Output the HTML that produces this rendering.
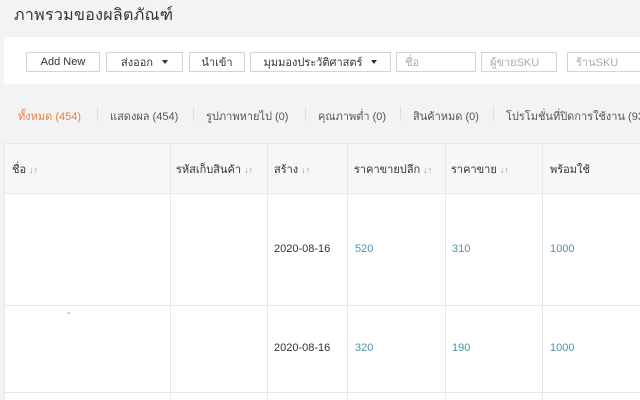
<!DOCTYPE html>
<html><head><meta charset="utf-8">
<style>
*{margin:0;padding:0;box-sizing:border-box}
body{width:640px;height:400px;overflow:hidden;background:#f2f3f5;font-family:"Liberation Sans","Noto Sans CJK SC",sans-serif;color:#333;position:relative}
.abs{position:absolute}
h1{position:absolute;left:14px;top:3px;font-size:16px;font-weight:normal;color:#333;letter-spacing:0.3px}
.bar{left:4px;top:37px;width:636px;height:47px;background:#fff}
.btn{position:absolute;top:52px;height:20px;border:1px solid #d4d4d4;background:#fff;font-size:11px;color:#333;display:flex;align-items:center;justify-content:center;white-space:nowrap}
.inp{position:absolute;top:52px;height:20px;border:1px solid #d4d4d4;background:#fff;font-size:11px;color:#aaa;padding-left:8px;display:flex;align-items:center;white-space:nowrap}
.car{display:inline-block;width:0;height:0;border-left:3.5px solid transparent;border-right:3.5px solid transparent;border-top:4px solid #333;margin-left:9px}
.tab{position:absolute;top:107px;font-size:11px;color:#555;white-space:nowrap}
.sep{position:absolute;top:106px;width:1px;height:15px;background:#ddd}
.tbl{left:4px;top:143px;width:636px;height:257px;background:#fff}
.hd{left:4px;top:143px;width:636px;height:51px;background:#f6f7f9;border-bottom:1px solid #e8e8e8;border-top:1px solid #e8e8e8}
.vl{position:absolute;top:143px;width:1px;height:257px;background:#e8e8e8}
.hl{position:absolute;left:4px;width:636px;height:1px;background:#e8e8e8}
.th{position:absolute;top:160px;font-size:11px;color:#333;white-space:nowrap}
.s{color:#999;font-size:9px}
.td{position:absolute;font-size:11px;white-space:nowrap}
.bl{color:#4a95a8}
</style></head><body>
<h1>ภาพรวมของผลิตภัณฑ์</h1>
<div class="abs bar"></div>
<div class="btn" style="left:26px;width:74px">Add New</div>
<div class="btn" style="left:106px;width:77px">ส่งออก<span class="car"></span></div>
<div class="btn" style="left:189px;width:56px">นำเข้า</div>
<div class="btn" style="left:250px;width:141px">มุมมองประวัติศาสตร์<span class="car"></span></div>
<div class="inp" style="left:396px;width:80px">ชื่อ</div>
<div class="inp" style="left:481px;width:76px">ผู้ขายSKU</div>
<div class="inp" style="left:567px;width:80px">ร้านSKU</div>

<div class="tab" style="left:18px;color:#e8803a">ทั้งหมด (454)</div>
<div class="sep" style="left:97px"></div>
<div class="tab" style="left:110px">แสดงผล (454)</div>
<div class="sep" style="left:193px"></div>
<div class="tab" style="left:206px">รูปภาพหายไป (0)</div>
<div class="sep" style="left:305px"></div>
<div class="tab" style="left:318px">คุณภาพต่ำ (0)</div>
<div class="sep" style="left:400px"></div>
<div class="tab" style="left:413px">สินค้าหมด (0)</div>
<div class="sep" style="left:493px"></div>
<div class="tab" style="left:506px">โปรโมชั่นที่ปิดการใช้งาน (93)</div>

<div class="abs tbl"></div>
<div class="abs hd"></div>
<div class="vl" style="left:4px"></div>
<div class="vl" style="left:170px"></div>
<div class="vl" style="left:267px"></div>
<div class="vl" style="left:347px"></div>
<div class="vl" style="left:445px"></div>
<div class="vl" style="left:542px"></div>
<div class="hl" style="top:305px"></div>
<div class="hl" style="top:392px"></div>

<div class="th" style="left:12px">ชื่อ <span class="s">↓↑</span></div>
<div class="th" style="left:176px">รหัสเก็บสินค้า <span class="s">↓↑</span></div>
<div class="th" style="left:274px">สร้าง <span class="s">↓↑</span></div>
<div class="th" style="left:354px">ราคาขายปลีก <span class="s">↓↑</span></div>
<div class="th" style="left:451px">ราคาขาย <span class="s">↓↑</span></div>
<div class="th" style="left:550px">พร้อมใช้</div>

<div class="td" style="left:274px;top:243px">2020-08-16</div>
<div class="td bl" style="left:355px;top:243px">520</div>
<div class="td bl" style="left:452px;top:243px">310</div>
<div class="td bl" style="left:550px;top:243px">1000</div>
<div class="td" style="left:67px;top:307px;color:#888">-</div>
<div class="td" style="left:274px;top:342px">2020-08-16</div>
<div class="td bl" style="left:355px;top:342px">320</div>
<div class="td bl" style="left:452px;top:342px">190</div>
<div class="td bl" style="left:550px;top:342px">1000</div>
</body></html>
